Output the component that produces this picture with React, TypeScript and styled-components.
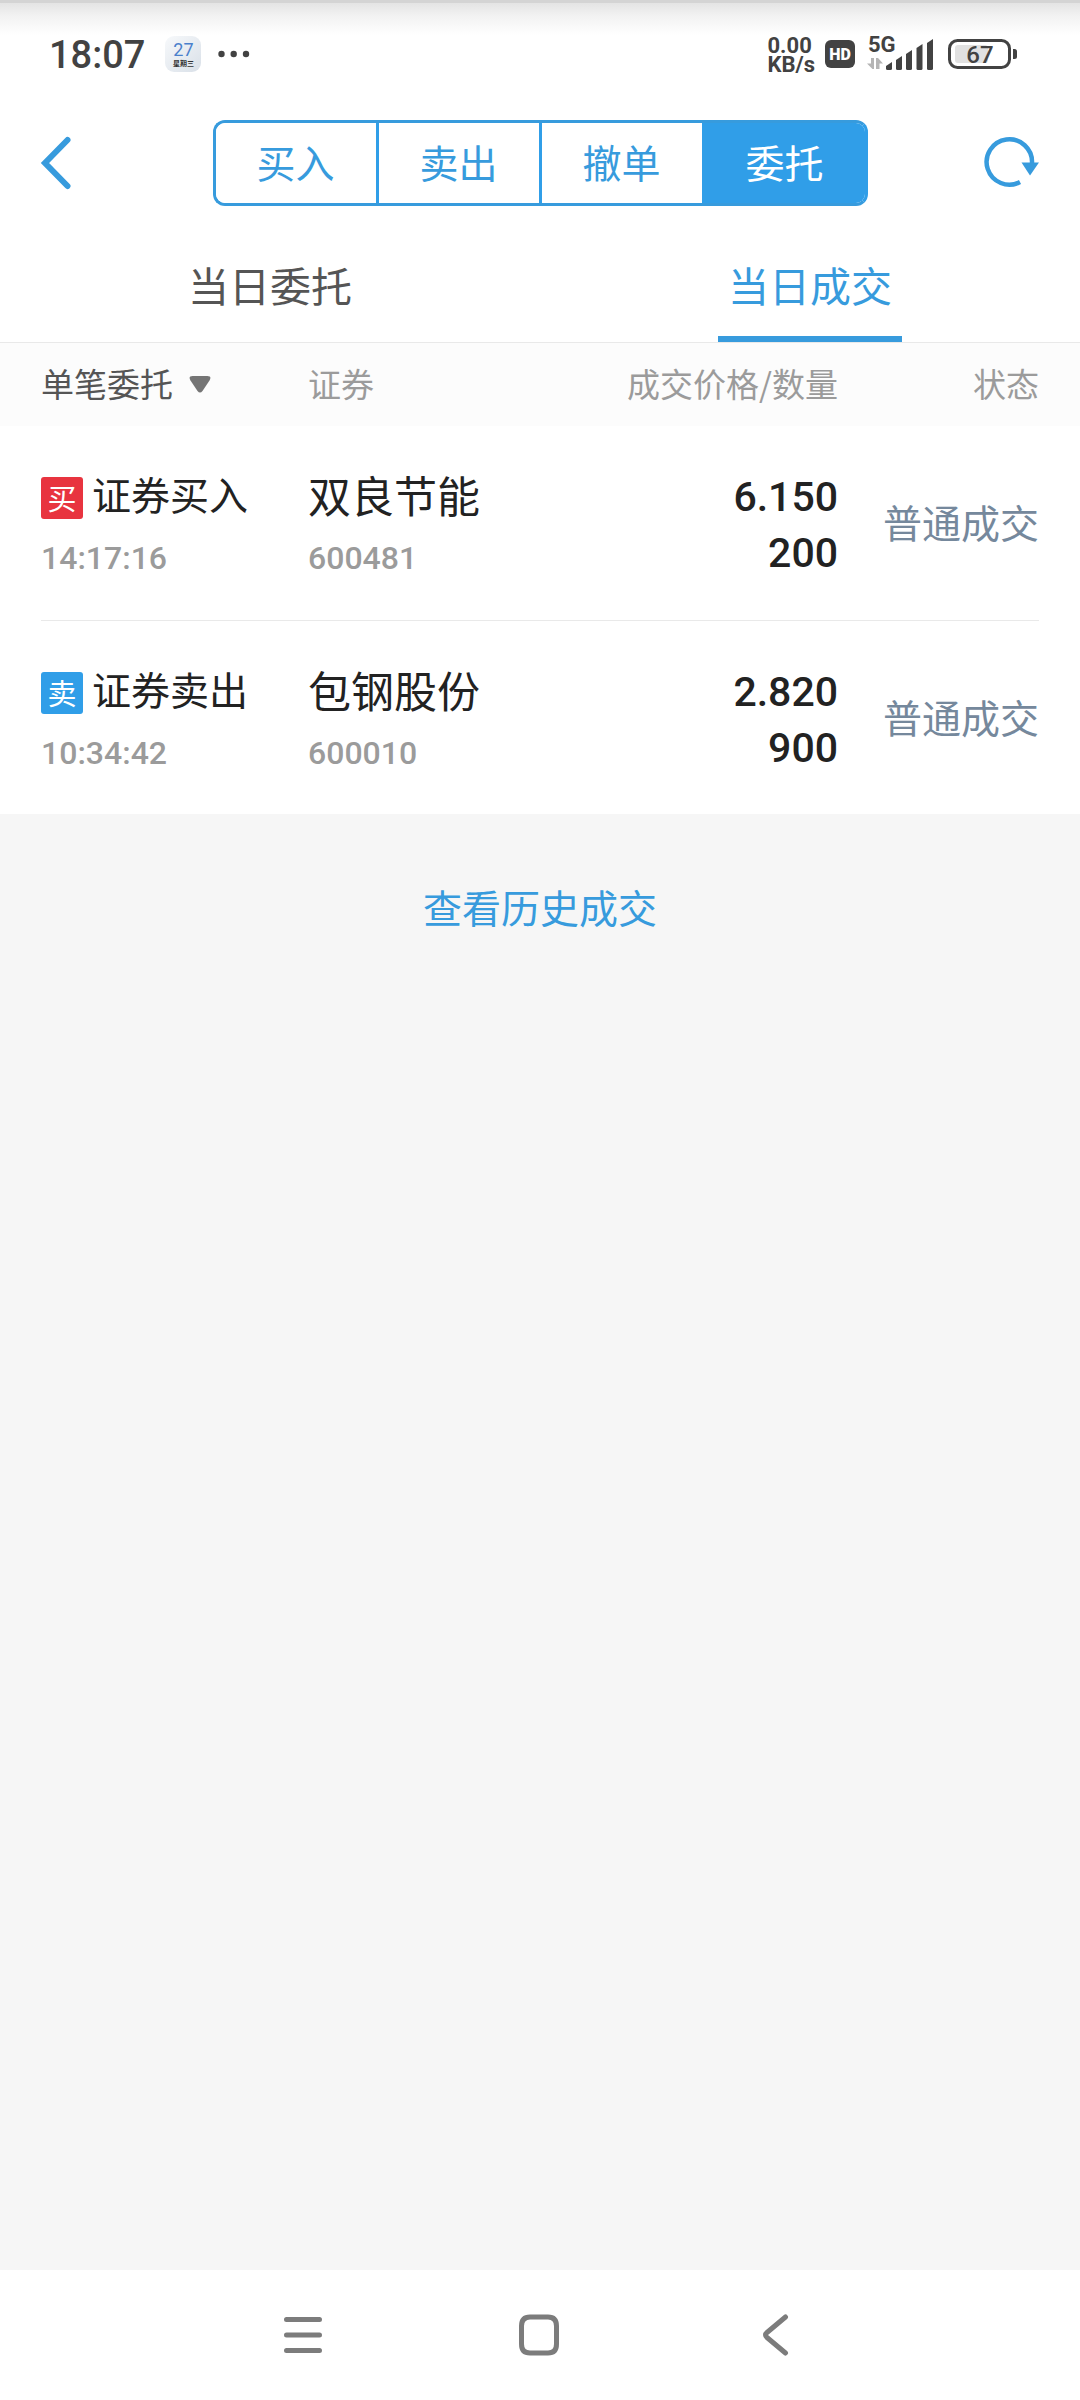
import React, { useState } from "react";
import styled, { createGlobalStyle } from "styled-components";

const color = {
  accent: "#379bdd",
  accentFill: "#309ee8",
  buy: "#e8343f",
  text: "#222222",
  subtle: "#555555",
  muted: "#9b9b9b",
  status: "#75889c",
  line: "#e9e9e9",
  page: "#f6f6f6",
  system: "#424242",
  nav: "#7c7c7c",
};

const cjk = `"Noto Sans CJK SC", "Noto Sans", sans-serif`;
const latin = `Roboto, "Noto Sans CJK SC", sans-serif`;

const GlobalStyle = createGlobalStyle`
  * { box-sizing: border-box; }
  body { margin: 0; background: ${color.page}; font-family: ${cjk}; color: ${color.text}; }
  button, select { margin: 0; padding: 0; border: 0; background: none; font: inherit; color: inherit; cursor: pointer; }
  svg { display: block; flex: none; }
`;

const Screen = styled.div`
  display: flex;
  flex-direction: column;
  min-height: 100vh;
`;

const StatusBar = styled.div`
  display: flex;
  align-items: center;
  justify-content: space-between;
  height: 108px;
  padding: 0 62px 0 49px;
  color: ${color.system};
  font-family: ${latin};
  background: linear-gradient(#d4d4d4 0, #d4d4d4 3px, #e4e4e4 3px, #f2f2f2 16px, #fdfdfd 32px, #ffffff 36px);
`;

const StatusGroup = styled.div`
  display: flex;
  align-items: center;
`;

const Clock = styled.time`
  margin-right: 20px;
  padding-top: 2px;
  font-size: 38px;
  line-height: 40px;
  font-weight: 500;
`;

const CalendarBadge = styled.div`
  display: flex;
  flex-direction: column;
  align-items: center;
  justify-content: center;
  width: 36px;
  height: 36px;
  margin-right: 17px;
  border-radius: 9px;
  background: linear-gradient(135deg, #f7f9fb, #d9e0e8);
`;

const CalendarDay = styled.span`
  font-size: 18px;
  line-height: 18px;
  color: #4a80cc;
`;

const CalendarWeekday = styled.span`
  font: 700 7px/8px ${cjk};
  color: #333333;
`;

const NetSpeed = styled.div`
  display: flex;
  flex-direction: column;
  margin-right: 10px;
  padding-top: 2px;
  font-weight: 700;
  font-size: 22px;
  line-height: 19px;
`;

const HdBadge = styled.div`
  width: 30px;
  height: 28px;
  margin-right: 12px;
  border-radius: 6px;
  background: ${color.system};
  color: #ffffff;
  font-size: 16px;
  line-height: 29px;
  font-weight: 900;
  text-align: center;
`;

const BatterySlot = styled.div`
  margin-left: 13px;
`;

const Toolbar = styled.header`
  display: flex;
  align-items: center;
  justify-content: space-between;
  height: 110px;
  padding: 0 39px;
  background: #ffffff;
  color: ${color.accent};
`;

const ToolButton = styled.button`
  width: 58px;
`;

const Segments = styled.nav`
  display: flex;
  flex: 1;
  max-width: 655px;
  height: 86px;
  border: 3px solid ${color.accent};
  border-right-color: ${color.accentFill};
  border-radius: 12px;
  overflow: hidden;
`;

const Segment = styled.button<{ $active: boolean }>`
  flex: 1;
  padding-bottom: 4px;
  font-size: 39px;
  line-height: 40px;
  color: ${(p) => (p.$active ? "#ffffff" : color.accent)};
  background: ${(p) => (p.$active ? color.accentFill : "#ffffff")};

  & + & {
    border-left: 3px solid ${(p) => (p.$active ? color.accentFill : color.accent)};
  }
`;

const Tabs = styled.div`
  display: flex;
  background: #ffffff;
  border-bottom: 1px solid ${color.line};
`;

const Tab = styled.button<{ $active: boolean }>`
  display: flex;
  flex: 1;
  justify-content: center;
  font-size: 41px;
  line-height: 104px;
  color: ${(p) => (p.$active ? color.accent : color.subtle)};

  span {
    width: 184px;
    padding-top: 14px;
    border-bottom: 6px solid ${(p) => (p.$active ? color.accent : "transparent")};
  }
`;

const Orders = styled.table`
  display: block;
  background: #ffffff;
`;

const OrdersHead = styled.thead`
  display: block;
  padding: 0 41px;
  background: #fcfcfc;
`;

const OrdersBody = styled.tbody`
  display: block;
  padding: 0 41px;
`;

const Row = styled.tr`
  display: grid;
  grid-template-columns: 267px 1fr 1fr 201px;
`;

const OrderRow = styled(Row)`
  height: 194px;

  & + & {
    border-top: 1px solid ${color.line};
  }
`;

const HeadCell = styled.th<{ $end?: boolean }>`
  height: 83px;
  padding: 0;
  font-size: 33px;
  line-height: 80px;
  font-weight: 400;
  white-space: nowrap;
  color: ${color.muted};
  text-align: ${(p) => (p.$end ? "right" : "left")};
`;

const Filter = styled.label`
  display: flex;
  align-items: center;
  gap: 16px;
  color: ${color.subtle};

  select {
    appearance: none;
    height: 83px;
    padding-bottom: 3px;
  }
`;

const Cell = styled.td`
  padding: 40px 0 0;
`;

const TypeLine = styled.div`
  display: flex;
  gap: 9px;
  height: 62px;
  font-size: 39px;
  line-height: 54px;
`;

const SideBadge = styled.span<{ $side: "buy" | "sell" }>`
  width: 42px;
  height: 42px;
  margin-top: 11px;
  border-radius: 3px;
  font-size: 29px;
  line-height: 40px;
  text-align: center;
  color: #ffffff;
  background: ${(p) => (p.$side === "buy" ? color.buy : color.accentFill)};
`;

const StockName = styled.div`
  height: 62px;
  font-size: 43px;
  line-height: 56px;
`;

const Meta = styled.div`
  font: 500 32px/60px ${latin};
  color: ${color.muted};
`;

const Figures = styled.td`
  padding: 43px 0 0;
  font: 500 41px/56px ${latin};
  text-align: right;
`;

const State = styled.td`
  padding: 0;
  font-size: 39px;
  line-height: 190px;
  text-align: right;
  color: ${color.status};
`;

const History = styled.main`
  flex: 1;
  padding-top: 62px;
  text-align: center;
`;

const HistoryLink = styled.a`
  font-size: 39px;
  line-height: 60px;
  color: ${color.accent};
  text-decoration: none;
`;

const SystemNav = styled.nav`
  display: flex;
  justify-content: center;
  height: 130px;
  padding-right: 2px;
  background: #ffffff;
  color: ${color.nav};
`;

const NavButton = styled.button`
  display: flex;
  align-items: center;
  justify-content: center;
  width: 236px;
`;

const DotsIcon = () => (
  <svg width="32" height="8" viewBox="0 0 32 8" fill="currentColor">
    <circle cx="3.5" cy="4" r="3.2" />
    <circle cx="15.7" cy="4" r="3.2" />
    <circle cx="28" cy="4" r="3.2" />
  </svg>
);

const SignalIcon = () => (
  <svg width="68" height="48" viewBox="0 -6 68 48" fill="currentColor">
    <text x="1" y="16" fontFamily="Roboto, sans-serif" fontSize="22" fontWeight="700">5G</text>
    <g fill="#b5b5b5">
      <path d="M4 22h3v11H5.500L0 27.500h4z" />
      <path d="M9 22h2l5 5.500h-3.500V33H9z" />
    </g>
    <path d="M19 30l6-4v6.500q0 1.500-1.500 1.500h-3q-1.500 0-1.500-1.500z" />
    <path d="M29 24l6-4v12.500q0 1.500-1.500 1.500h-3q-1.500 0-1.500-1.500z" />
    <path d="M39 18l6-4v18.500q0 1.500-1.500 1.500h-3q-1.500 0-1.500-1.500z" />
    <path d="M49.500 12l6-4v24.500q0 1.500-1.500 1.500h-3q-1.500 0-1.500-1.500z" />
    <path d="M60 7l6-4v29.500q0 1.500-1.500 1.500h-3q-1.500 0-1.500-1.500z" />
  </svg>
);

const BatteryIcon = () => (
  <svg width="70" height="30" viewBox="0 0 70 30">
    <rect x="7" y="6" width="33" height="18" rx="3" fill="#e1e1e1" />
    <rect x="1.500" y="1.500" width="60" height="27" rx="8" fill="none" stroke="currentColor" strokeWidth="3" />
    <path d="M65 10h1.500q2.500 0 2.500 2.500v5q0 2.500-2.500 2.500H65z" fill="currentColor" />
    <text x="32" y="24" textAnchor="middle" fontFamily="Roboto, sans-serif" fontSize="24" fontWeight="500" fill="currentColor">67</text>
  </svg>
);

const BackIcon = () => (
  <svg width="34" height="54" viewBox="0 0 34 54" fill="none" stroke="currentColor" strokeWidth="6">
    <path d="M28.500 4L6 27l22.500 23" strokeLinecap="round" strokeLinejoin="miter" />
  </svg>
);

const RefreshIcon = () => (
  <svg width="58" height="54" viewBox="0 0 58 54">
    <path d="M38 46A22.700 22.700 0 1 1 50 27" transform="translate(-1 0)" fill="none" stroke="currentColor" strokeWidth="4.500" />
    <path d="M38.500 26.500h17.500l-9 13z" fill="currentColor" />
  </svg>
);

const CaretIcon = () => (
  <svg width="22" height="17" viewBox="0 0 22 17" fill="#757575">
    <path d="M3.500 0h15q4.500 0 2 4.500l-7 10.500q-2.500 3-5 0l-7-10.500Q-1 0 3.500 0z" />
  </svg>
);

const MenuIcon = () => (
  <svg width="40" height="42" viewBox="0 0 40 42" stroke="currentColor" strokeWidth="5" strokeLinecap="round">
    <path d="M3.500 5.500h33M3.500 21h33M3.500 36.500h33" />
  </svg>
);

const HomeIcon = () => (
  <svg width="42" height="42" viewBox="0 0 42 42" fill="none" stroke="currentColor" strokeWidth="5">
    <path d="M12 3h18q8.500 0 8.500 9v18q0 9-8.500 9H12q-8.500 0-8.500-9V12Q3.500 3 12 3z" />
  </svg>
);

const NavBackIcon = () => (
  <svg width="28" height="42" viewBox="0 0 28 42" fill="none" stroke="currentColor" strokeWidth="5" strokeLinecap="round">
    <path d="M24.500 3L6 18.500q-3 2.500 0 5L24.500 39" />
  </svg>
);

type Order = {
  side: "buy" | "sell";
  mark: string;
  type: string;
  time: string;
  name: string;
  code: string;
  price: string;
  amount: string;
  state: string;
};

const orders: Order[] = [
  { side: "buy", mark: "买", type: "证券买入", time: "14:17:16", name: "双良节能", code: "600481", price: "6.150", amount: "200", state: "普通成交" },
  { side: "sell", mark: "卖", type: "证券卖出", time: "10:34:42", name: "包钢股份", code: "600010", price: "2.820", amount: "900", state: "普通成交" },
];

const segments = ["买入", "卖出", "撤单", "委托"];
const tabs = ["当日委托", "当日成交"];

export default function App() {
  const [segment, setSegment] = useState("委托");
  const [tab, setTab] = useState("当日成交");

  return (
    <Screen>
      <GlobalStyle />
      <StatusBar>
        <StatusGroup>
          <Clock>18:07</Clock>
          <CalendarBadge>
            <CalendarDay>27</CalendarDay>
            <CalendarWeekday>星期三</CalendarWeekday>
          </CalendarBadge>
          <DotsIcon />
        </StatusGroup>
        <StatusGroup>
          <NetSpeed>
            <span>0.00</span>
            <span>KB/s</span>
          </NetSpeed>
          <HdBadge>HD</HdBadge>
          <SignalIcon />
          <BatterySlot>
            <BatteryIcon />
          </BatterySlot>
        </StatusGroup>
      </StatusBar>

      <Toolbar>
        <ToolButton type="button" aria-label="返回">
          <BackIcon />
        </ToolButton>
        <Segments>
          {segments.map((s) => (
            <Segment key={s} type="button" $active={s === segment} onClick={() => setSegment(s)}>
              {s}
            </Segment>
          ))}
        </Segments>
        <ToolButton type="button" aria-label="刷新">
          <RefreshIcon />
        </ToolButton>
      </Toolbar>

      <Tabs role="tablist">
        {tabs.map((t) => (
          <Tab key={t} type="button" role="tab" aria-selected={t === tab} $active={t === tab} onClick={() => setTab(t)}>
            <span>{t}</span>
          </Tab>
        ))}
      </Tabs>

      <Orders>
        <OrdersHead>
          <Row>
            <HeadCell>
              <Filter>
                <select aria-label="委托方式">
                  <option>单笔委托</option>
                </select>
                <CaretIcon />
              </Filter>
            </HeadCell>
            <HeadCell>证券</HeadCell>
            <HeadCell $end>成交价格/数量</HeadCell>
            <HeadCell $end>状态</HeadCell>
          </Row>
        </OrdersHead>
        <OrdersBody>
          {orders.map((o) => (
            <OrderRow key={o.time}>
              <Cell>
                <TypeLine>
                  <SideBadge $side={o.side}>{o.mark}</SideBadge>
                  {o.type}
                </TypeLine>
                <Meta>{o.time}</Meta>
              </Cell>
              <Cell>
                <StockName>{o.name}</StockName>
                <Meta>{o.code}</Meta>
              </Cell>
              <Figures>
                <div>{o.price}</div>
                <div>{o.amount}</div>
              </Figures>
              <State>{o.state}</State>
            </OrderRow>
          ))}
        </OrdersBody>
      </Orders>

      <History>
        <HistoryLink href="#history">查看历史成交</HistoryLink>
      </History>

      <SystemNav>
        <NavButton type="button" aria-label="菜单">
          <MenuIcon />
        </NavButton>
        <NavButton type="button" aria-label="主页">
          <HomeIcon />
        </NavButton>
        <NavButton type="button" aria-label="后退">
          <NavBackIcon />
        </NavButton>
      </SystemNav>
    </Screen>
  );
}
